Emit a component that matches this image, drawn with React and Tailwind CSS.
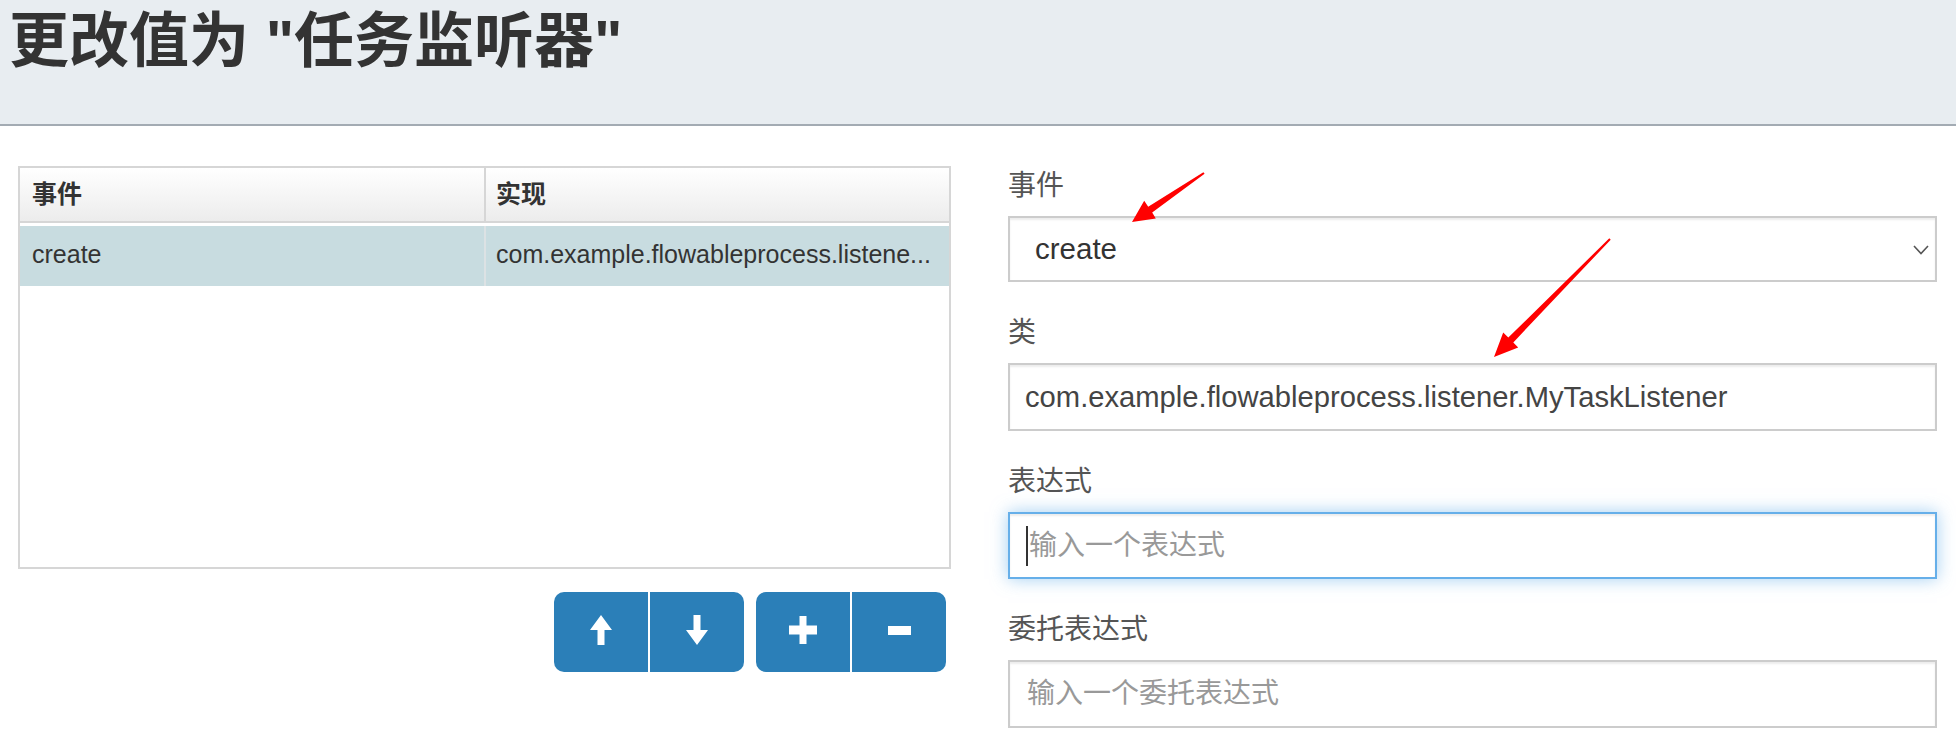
import React from "react";

const FONT = { fontFamily: '"Liberation Sans", "Noto Sans CJK SC", sans-serif' };

function UpIcon() {
  return (
    <svg width="22" height="30" viewBox="0 0 22 30" fill="#fff">
      <path d="M11 0 L22 15 L14.5 15 L14.5 30 L7.5 30 L7.5 15 L0 15 Z" />
    </svg>
  );
}
function DownIcon() {
  return (
    <svg width="22" height="30" viewBox="0 0 22 30" fill="#fff">
      <path d="M7.5 0 H14.5 V15 H22 L11 30 L0 15 H7.5 Z" />
    </svg>
  );
}
function PlusIcon() {
  return (
    <svg width="28" height="28" viewBox="0 0 28 28" fill="#fff">
      <path d="M10.5 0 H17.5 V9.5 H28 V18.5 H17.5 V28 H10.5 V18.5 H0 V9.5 H10.5 Z" />
    </svg>
  );
}
function MinusIcon() {
  return (
    <svg width="23" height="9" viewBox="0 0 23 9" fill="#fff">
      <rect x="0" y="0" width="23" height="9" />
    </svg>
  );
}

function Btn({ children, side }) {
  return (
    <button
      type="button"
      className={
        "flex h-[80px] w-[94px] items-center justify-center bg-[#2b7fb8] pb-[4px] " +
        (side === "l" ? "rounded-l-[10px]" : "rounded-r-[10px]")
      }
    >
      {children}
    </button>
  );
}

function Label({ children }) {
  return <div className="mb-[10px] h-[40px] text-[28px] leading-[40px] text-[#555]">{children}</div>;
}

export default function App() {
  return (
    <div className="relative h-[730px] w-full overflow-hidden bg-white" style={FONT}>
      <div className="h-[126px] border-b-2 border-[#a3abb3] bg-[#e8edf1] px-[9px]">
        <h1 className="text-[60px] font-bold leading-[84px] text-[#333]">更改值为 "任务监听器"</h1>
      </div>

      <div className="grid grid-cols-[933px_1fr] gap-[57px] pl-[18px] pr-[19px] pt-[40px]">
        {/* left column */}
        <div>
          <div className="h-[403px] border-2 border-[#d6d6d6] text-[25px] text-[#333]">
            <div className="flex h-[55px] border-b-2 border-[#d6d6d6] bg-gradient-to-b from-white to-[#ececec] font-bold">
              <div className="flex w-[466px] items-center border-r-2 border-[#d6d6d6] pl-[12px]">事件</div>
              <div className="flex flex-1 items-center pl-[10px]">实现</div>
            </div>
            <div className="mt-[3px] flex h-[60px] bg-[#c8dce0]">
              <div className="flex w-[466px] items-center border-r-2 border-[#dce2e4] pl-[12px] pb-[3px]">create</div>
              <div className="flex flex-1 items-center overflow-hidden whitespace-nowrap pl-[10px] pb-[3px]">
                com.example.flowableprocess.listene...
              </div>
            </div>
          </div>
          <div className="mt-[23px] flex justify-end gap-[12px] pr-[5px]">
            <div className="flex gap-[2px]">
              <Btn side="l">
                <UpIcon />
              </Btn>
              <Btn side="r">
                <DownIcon />
              </Btn>
            </div>
            <div className="flex gap-[2px]">
              <Btn side="l">
                <PlusIcon />
              </Btn>
              <Btn side="r">
                <MinusIcon />
              </Btn>
            </div>
          </div>
        </div>

        {/* right column */}
        <div className="flex flex-col gap-[31px]">
          <div>
            <Label>事件</Label>
            <div className="relative">
              <select
                defaultValue="create"
                className="h-[66px] w-full appearance-none border-2 border-[#cccccc] bg-white pl-[25px] text-[29.5px] text-[#333] shadow-[inset_0_2px_2px_rgba(0,0,0,0.075)] outline-none"
                style={FONT}
              >
                <option value="create">create</option>
                <option value="assignment">assignment</option>
                <option value="complete">complete</option>
                <option value="delete">delete</option>
              </select>
              <svg
                className="pointer-events-none absolute right-[8px] top-[29px]"
                width="16"
                height="10"
                viewBox="0 0 16 10"
                fill="none"
                stroke="#555"
                strokeWidth="1.6"
              >
                <path d="M1 1 L8 8.5 L15 1" />
              </svg>
            </div>
          </div>

          <div>
            <Label>类</Label>
            <input
              readOnly
              value="com.example.flowableprocess.listener.MyTaskListener"
              className="h-[68px] w-full border-2 border-[#cccccc] bg-white pl-[15px] text-[29.2px] text-[#444] shadow-[inset_0_2px_2px_rgba(0,0,0,0.075)] outline-none"
              style={FONT}
            />
          </div>

          <div>
            <Label>表达式</Label>
            <div className="relative">
              <input
                placeholder="输入一个表达式"
                className="h-[67px] w-full border-2 border-[#66afe9] bg-white pl-[19px] text-[28px] text-[#444] shadow-[inset_0_2px_2px_rgba(0,0,0,0.075),0_0_16px_rgba(102,175,233,0.6)] outline-none placeholder:text-[#999]"
                style={FONT}
              />
              <span className="pointer-events-none absolute left-[18px] top-[14px] h-[40px] w-[2px] bg-[#333]" />
            </div>
          </div>

          <div>
            <Label>委托表达式</Label>
            <input
              placeholder="输入一个委托表达式"
              className="h-[68px] w-full border-2 border-[#cccccc] bg-white pl-[17px] text-[28px] text-[#444] shadow-[inset_0_2px_2px_rgba(0,0,0,0.075)] outline-none placeholder:text-[#999]"
              style={FONT}
            />
          </div>
        </div>
      </div>

      {/* red annotation arrows */}
      <svg
        className="pointer-events-none absolute left-0 top-0"
        width="1956"
        height="730"
        viewBox="0 0 1956 730"
        fill="#ff0000"
      >
        <polygon points="1203.4,172.2 1204.6,173.8 1152.2,212.5 1155.8,218.5 1132,222 1144.2,200.8 1148.2,206.7" />
        <polygon points="1609.3,238.3 1610.7,239.7 1513.3,342.4 1518.2,347.5 1494,357 1503.2,332.5 1508.3,337.6" />
      </svg>
    </div>
  );
}
